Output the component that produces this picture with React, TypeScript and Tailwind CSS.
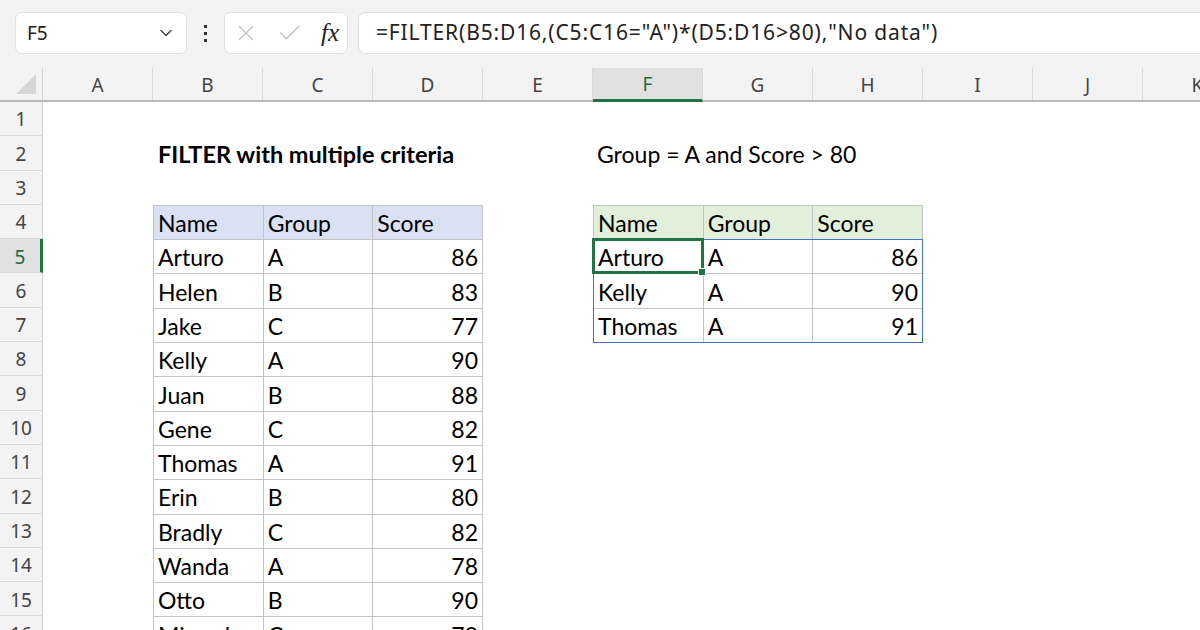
import React from 'react';
import { ChevronDown, X, Check } from 'lucide-react';

const COLS = ['A', 'B', 'C', 'D', 'E', 'F', 'G', 'H', 'I', 'J', 'K'];
const ROWS = Array.from({ length: 16 }, (_, i) => i + 1);

const DATA: [string, string, number][] = [
  ['Arturo', 'A', 86],
  ['Helen', 'B', 83],
  ['Jake', 'C', 77],
  ['Kelly', 'A', 90],
  ['Juan', 'B', 88],
  ['Gene', 'C', 82],
  ['Thomas', 'A', 91],
  ['Erin', 'B', 80],
  ['Bradly', 'C', 82],
  ['Wanda', 'A', 78],
  ['Otto', 'B', 90],
  ['Miranda', 'C', 79],
];

const RESULT = DATA.filter((r) => r[1] === 'A' && r[2] > 80);

const cellFont = { fontFamily: 'Lato, "Liberation Sans", sans-serif' };
const uiFont = { fontFamily: '"Noto Sans", "Open Sans", sans-serif' };

function Cell({ children, right = false, bg = '' }: { children: React.ReactNode; right?: boolean; bg?: string }) {
  return (
    <div
      className={`h-[34.3px] flex items-center px-[4px] pt-[2px] border-r border-b border-[#c3c3c3] text-[23px] text-black leading-none whitespace-nowrap ${
        right ? 'justify-end' : ''
      } ${bg}`}
    >
      {children}
    </div>
  );
}

function Toolbar() {
  return (
    <div className="h-[68px] bg-[#f3f3f3] flex items-center pl-[15px] pb-[2px]" style={uiFont}>
      {/* Name box */}
      <div className="w-[172px] h-[42px] bg-white border border-[#e1e1e1] rounded-[7px] flex items-center justify-between pl-[11px] pr-[10px]">
        <span className="text-[19px] text-[#222]">F5</span>
        <ChevronDown className="w-[20px] h-[20px] text-[#444]" strokeWidth={1.6} />
      </div>
      {/* Dots */}
      <div className="w-[37px] flex flex-col items-center gap-[4px]">
        <div className="w-[3px] h-[3px] bg-[#333]" />
        <div className="w-[3px] h-[3px] bg-[#333]" />
        <div className="w-[3px] h-[3px] bg-[#333]" />
      </div>
      {/* Cancel / enter / fx */}
      <div className="w-[124px] h-[42px] bg-white border border-[#e1e1e1] rounded-[7px] flex items-center pl-[8px] pr-[8px] justify-between">
        <X className="w-[26px] h-[26px] text-[#c4c4c4]" strokeWidth={1.3} />
        <Check className="w-[28px] h-[28px] text-[#c4c4c4]" strokeWidth={1.3} />
        <span
          className="text-[25px] italic text-[#222] leading-none pb-[2px]"
          style={{ fontFamily: '"Liberation Serif", "DejaVu Serif", serif' }}
        >
          fx
        </span>
      </div>
      {/* Formula */}
      <div className="ml-[10px] flex-1 h-[42px] bg-white border border-[#e1e1e1] border-r-0 rounded-l-[7px] flex items-center pl-[17px]">
        <span className="text-[21px] tracking-[0.85px] text-[#222] whitespace-nowrap">
          =FILTER(B5:D16,(C5:C16="A")*(D5:D16&gt;80),"No data")
        </span>
      </div>
    </div>
  );
}

function ColumnHeader() {
  return (
    <div className="flex h-[34px] bg-[#f3f3f3] border-b-2 border-[#b9b9b9]" style={uiFont}>
      <div className="w-[43px] shrink-0 border-r border-[#d4d4d4] flex items-end justify-end pr-[6px] pb-[6px]">
        <svg width="20" height="20" viewBox="0 0 20 20">
          <polygon points="20,0 20,20 0,20" fill="#d6d6d6" />
        </svg>
      </div>
      {COLS.map((c) => (
        <div
          key={c}
          className={`w-[110px] shrink-0 flex items-center justify-center text-[19px] pt-[2px] border-r border-[#d9d9d9] ${
            c === 'F' ? 'bg-[#e1e1e1] text-[#1e6b3f] border-b-[3px] border-b-[#217346] -mb-[2px]' : 'text-[#444]'
          }`}
        >
          {c}
        </div>
      ))}
    </div>
  );
}

function RowHeaders() {
  return (
    <div className="w-[43px] shrink-0 flex flex-col bg-[#f3f3f3]" style={uiFont}>
      {ROWS.map((r) => (
        <div
          key={r}
          className={`h-[34.3px] shrink-0 flex items-center justify-center text-[19px] pt-[2px] border-b border-[#dadada] ${
            r === 5
              ? 'bg-[#e1e1e1] text-[#1e6b3f] border-r-[3px] border-r-[#217346]'
              : 'text-[#444] border-r border-r-[#cfcfcf]'
          }`}
        >
          {r}
        </div>
      ))}
    </div>
  );
}

export default function App() {
  return (
    <div className="w-[1200px] h-[630px] overflow-hidden bg-white">
      <Toolbar />
      <ColumnHeader />
      <div className="flex">
        <RowHeaders />
        <div
          className="grid grid-cols-[repeat(11,110px)] grid-rows-[repeat(16,34.3px)] shrink-0"
          style={cellFont}
        >
          {/* B2 title */}
          <div className="col-start-2 row-start-2 flex items-center px-[5px] pt-[2px] text-[23.5px] font-bold text-black whitespace-nowrap leading-none">
            FILTER with multiple criteria
          </div>
          {/* F2 note */}
          <div className="col-start-6 row-start-2 flex items-center px-[4px] pt-[2px] text-[23px] text-black whitespace-nowrap leading-none">
            Group = A and Score &gt; 80
          </div>

          {/* Source table B4:D16 */}
          <div className="col-start-2 col-span-3 row-start-4 row-span-13 grid grid-cols-3 content-start border-l border-t border-[#c3c3c3]">
            <Cell bg="bg-[#d9e1f2]">Name</Cell>
            <Cell bg="bg-[#d9e1f2]">Group</Cell>
            <Cell bg="bg-[#d9e1f2]">Score</Cell>
            {DATA.map(([name, group, score]) => (
              <React.Fragment key={name}>
                <Cell>{name}</Cell>
                <Cell>{group}</Cell>
                <Cell right>{score}</Cell>
              </React.Fragment>
            ))}
          </div>

          {/* Result table F4:H7 */}
          <div className="col-start-6 col-span-3 row-start-4 row-span-4 flex flex-col border-l border-t border-[#c3c3c3]">
            <div className="grid grid-cols-3">
              <Cell bg="bg-[#e2efda]">Name</Cell>
              <Cell bg="bg-[#e2efda]">Group</Cell>
              <Cell bg="bg-[#e2efda]">Score</Cell>
            </div>
            <div className="relative grid grid-cols-3">
              {RESULT.map(([name, group, score]) => (
                <React.Fragment key={name}>
                  <Cell>{name}</Cell>
                  <Cell>{group}</Cell>
                  <Cell right>{score}</Cell>
                </React.Fragment>
              ))}
              {/* spill range border */}
              <div className="absolute -left-[1px] -top-[1px] right-0 bottom-0 border border-[#4472c4] pointer-events-none" />
              {/* active cell */}
              <div className="absolute -left-[2px] -top-[2px] w-[112px] h-[36px] border-[3px] border-[#217346] pointer-events-none">
                <div className="absolute -right-[5px] -bottom-[5px] w-[8px] h-[8px] bg-[#217346] border border-white" />
              </div>
            </div>
          </div>
        </div>
      </div>
    </div>
  );
}
